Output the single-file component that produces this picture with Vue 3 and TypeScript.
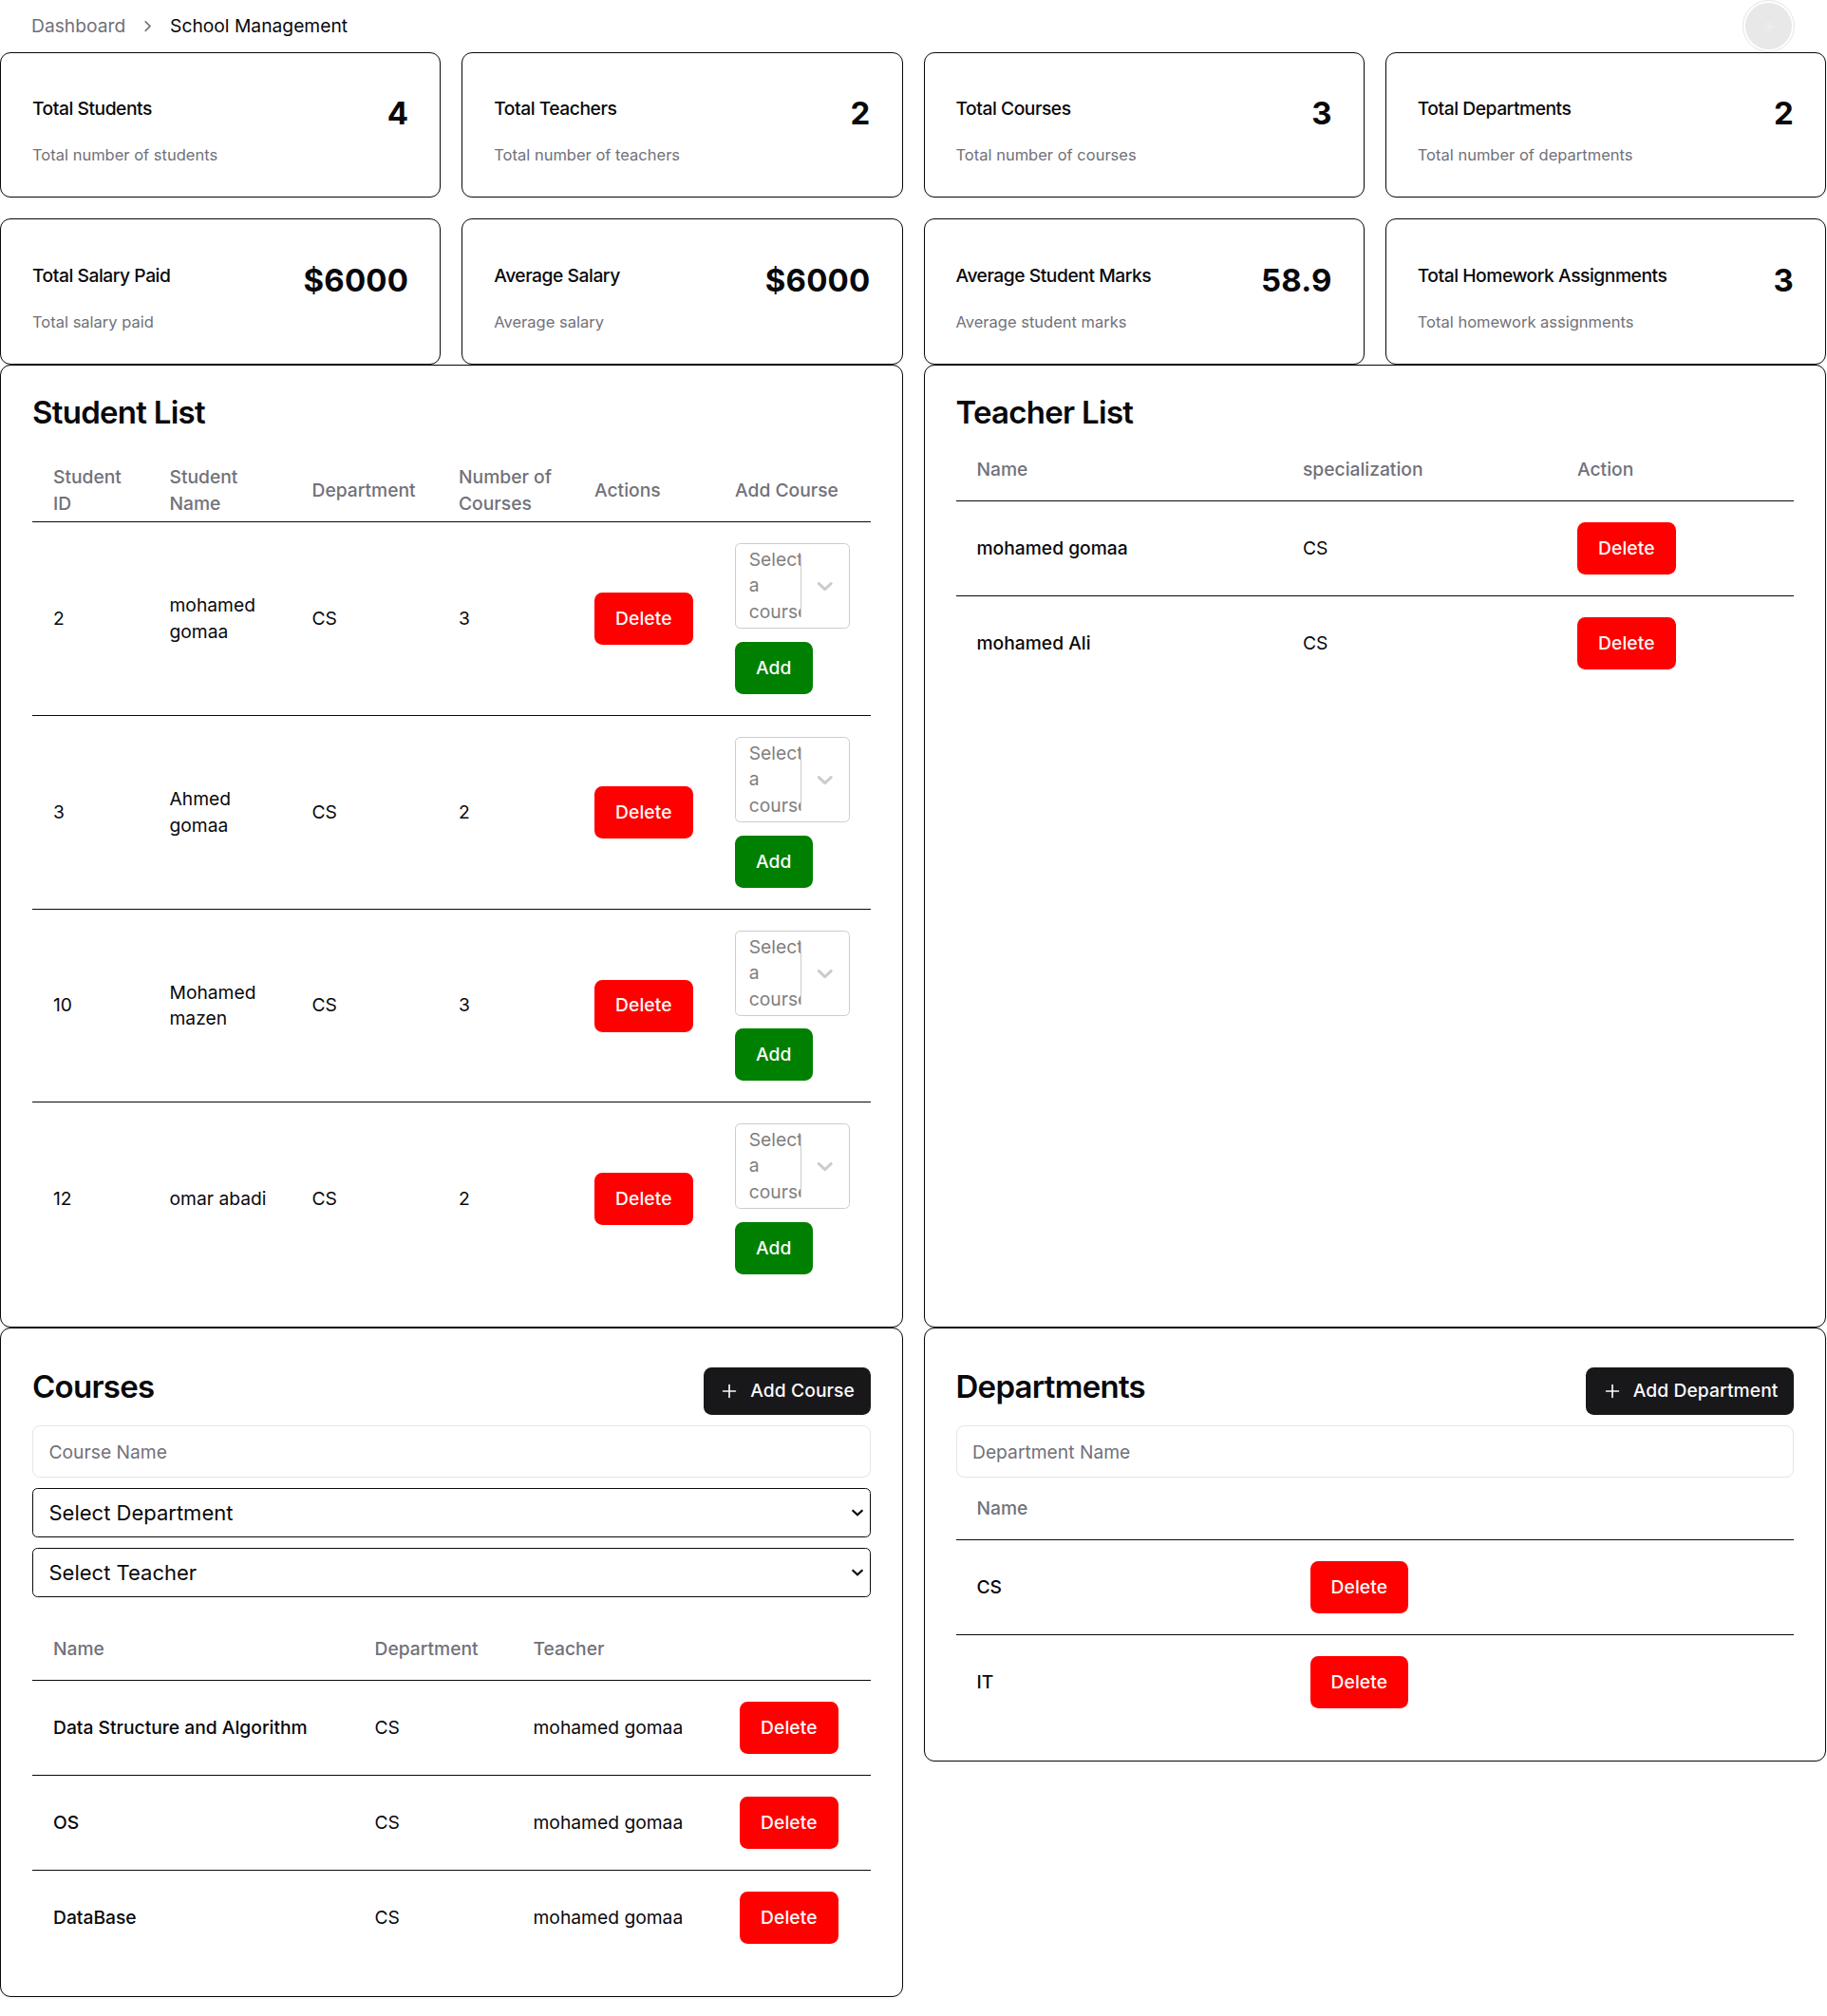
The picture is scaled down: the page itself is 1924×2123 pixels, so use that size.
<script setup lang="ts">
interface Stat {
  title: string
  value: string
  note: string
}

interface Student {
  id: number
  name: string
  department: string
  courses: number
}

interface Teacher {
  name: string
  specialization: string
}

interface Course {
  name: string
  department: string
  teacher: string
}

const stats: Stat[] = [
  { title: 'Total Students', value: '4', note: 'Total number of students' },
  { title: 'Total Teachers', value: '2', note: 'Total number of teachers' },
  { title: 'Total Courses', value: '3', note: 'Total number of courses' },
  { title: 'Total Departments', value: '2', note: 'Total number of departments' },
  { title: 'Total Salary Paid', value: '$6000', note: 'Total salary paid' },
  { title: 'Average Salary', value: '$6000', note: 'Average salary' },
  { title: 'Average Student Marks', value: '58.9', note: 'Average student marks' },
  { title: 'Total Homework Assignments', value: '3', note: 'Total homework assignments' },
]

const students: Student[] = [
  { id: 2, name: 'mohamed gomaa', department: 'CS', courses: 3 },
  { id: 3, name: 'Ahmed gomaa', department: 'CS', courses: 2 },
  { id: 10, name: 'Mohamed mazen', department: 'CS', courses: 3 },
  { id: 12, name: 'omar abadi', department: 'CS', courses: 2 },
]

const teachers: Teacher[] = [
  { name: 'mohamed gomaa', specialization: 'CS' },
  { name: 'mohamed Ali', specialization: 'CS' },
]

const courses: Course[] = [
  { name: 'Data Structure and Algorithm', department: 'CS', teacher: 'mohamed gomaa' },
  { name: 'OS', department: 'CS', teacher: 'mohamed gomaa' },
  { name: 'DataBase', department: 'CS', teacher: 'mohamed gomaa' },
]

const departments: string[] = ['CS', 'IT']
const pickers: string[] = ['Select Department', 'Select Teacher']
</script>

<template>
  <div class="page">
    <header class="topbar">
      <nav class="crumbs">
        <span class="crumb-link">Dashboard</span>
        <svg class="crumb-sep" viewBox="0 0 24 24"><path d="m9 18 6-6-6-6" /></svg>
        <span>School Management</span>
      </nav>
      <div class="avatar">
        <div class="avatar-fill">
          <svg viewBox="0 0 12 12">
            <circle class="ring" cx="6" cy="6" r="4.2" />
            <circle class="core" cx="6" cy="6" r="1.4" />
          </svg>
        </div>
      </div>
    </header>

    <section class="stats">
      <article v-for="s in stats" :key="s.title" class="card stat">
        <div class="stat-head">
          <h3 class="stat-title">{{ s.title }}</h3>
          <div class="stat-value">{{ s.value }}</div>
        </div>
        <p class="stat-note">{{ s.note }}</p>
      </article>
    </section>

    <section class="panels">
      <article class="card panel">
        <h2 class="heading">Student List</h2>
        <table class="table students">
          <colgroup>
            <col class="s1" /><col class="s2" /><col class="s3" /><col class="s4" /><col class="s5" /><col />
          </colgroup>
          <thead>
            <tr>
              <th>Student ID</th>
              <th>Student Name</th>
              <th>Department</th>
              <th>Number of Courses</th>
              <th>Actions</th>
              <th>Add Course</th>
            </tr>
          </thead>
          <tbody>
            <tr v-for="s in students" :key="s.id">
              <td>{{ s.id }}</td>
              <td>{{ s.name }}</td>
              <td>{{ s.department }}</td>
              <td>{{ s.courses }}</td>
              <td><button class="btn danger">Delete</button></td>
              <td>
                <div class="combo">
                  <div class="combo-value"><div class="combo-text">Select a course</div></div>
                  <span class="combo-line"></span>
                  <div class="combo-arrow">
                    <svg viewBox="0 0 20 20">
                      <path d="M4.516 7.548c0.436-0.446 1.043-0.481 1.576 0l3.908 3.747 3.908-3.747c0.533-0.481 1.141-0.446 1.574 0 0.436 0.445 0.408 1.197 0 1.615-0.406 0.418-4.695 4.502-4.695 4.502-0.217 0.223-0.502 0.335-0.787 0.335s-0.57-0.112-0.789-0.335c0 0-4.287-4.084-4.695-4.502s-0.436-1.17 0-1.615z" />
                    </svg>
                  </div>
                </div>
                <button class="btn success">Add</button>
              </td>
            </tr>
          </tbody>
        </table>
      </article>

      <article class="card panel">
        <h2 class="heading">Teacher List</h2>
        <table class="table teachers">
          <colgroup><col class="t1" /><col class="t2" /><col /></colgroup>
          <thead>
            <tr>
              <th>Name</th>
              <th>specialization</th>
              <th>Action</th>
            </tr>
          </thead>
          <tbody>
            <tr v-for="t in teachers" :key="t.name">
              <td class="strong">{{ t.name }}</td>
              <td>{{ t.specialization }}</td>
              <td><button class="btn danger">Delete</button></td>
            </tr>
          </tbody>
        </table>
      </article>

      <article class="card panel">
        <div class="panel-head">
          <h2 class="heading">Courses</h2>
          <button class="btn primary">
            <svg viewBox="0 0 24 24"><path d="M5 12h14" /><path d="M12 5v14" /></svg>
            Add Course
          </button>
        </div>
        <input class="field" type="text" placeholder="Course Name" />
        <div v-for="p in pickers" :key="p" class="picker">
          <span>{{ p }}</span>
          <svg viewBox="0 0 14 8"><path d="M1.6 1.3 7 6.3l5.4-5" /></svg>
        </div>
        <table class="table courses">
          <colgroup><col class="c1" /><col class="c2" /><col class="c3" /><col /></colgroup>
          <thead>
            <tr>
              <th>Name</th>
              <th>Department</th>
              <th>Teacher</th>
              <th></th>
            </tr>
          </thead>
          <tbody>
            <tr v-for="c in courses" :key="c.name">
              <td class="strong">{{ c.name }}</td>
              <td>{{ c.department }}</td>
              <td>{{ c.teacher }}</td>
              <td><button class="btn danger">Delete</button></td>
            </tr>
          </tbody>
        </table>
      </article>

      <article class="card panel short">
        <div class="panel-head">
          <h2 class="heading">Departments</h2>
          <button class="btn primary">
            <svg viewBox="0 0 24 24"><path d="M5 12h14" /><path d="M12 5v14" /></svg>
            Add Department
          </button>
        </div>
        <input class="field" type="text" placeholder="Department Name" />
        <table class="table">
          <colgroup><col class="d1" /><col /></colgroup>
          <thead>
            <tr>
              <th>Name</th>
              <th></th>
            </tr>
          </thead>
          <tbody>
            <tr v-for="d in departments" :key="d">
              <td class="strong">{{ d }}</td>
              <td><button class="btn danger">Delete</button></td>
            </tr>
          </tbody>
        </table>
      </article>
    </section>
  </div>
</template>

<style>
body {
  margin: 0;
  background: #fff;
}
</style>

<style scoped>
.page,
.page * {
  box-sizing: border-box;
}
.page {
  width: 1923px;
  min-height: 2123px;
  font-family: Inter, 'Liberation Sans', sans-serif;
  font-size: 19.25px;
  line-height: 27.5px;
  color: #09090b;
}
h2,
h3,
p {
  margin: 0;
}
.topbar {
  display: flex;
  align-items: center;
  justify-content: space-between;
  height: 55px;
  padding: 0 33px;
}
.crumbs {
  display: flex;
  align-items: center;
  gap: 13.75px;
}
.crumb-link {
  color: #71717a;
}
.crumb-sep {
  width: 19.25px;
  height: 19.25px;
  fill: none;
  stroke: #71717a;
  stroke-width: 2;
  stroke-linecap: round;
  stroke-linejoin: round;
}
.avatar {
  display: flex;
  width: 55px;
  height: 55px;
  padding: 2px;
  border: 1px solid #e4e4e7;
  border-radius: 50%;
}
.avatar-fill {
  display: flex;
  flex: 1;
  align-items: center;
  justify-content: center;
  border-radius: 50%;
  background: #e8e8e8;
}
.avatar-fill svg {
  width: 12px;
  height: 12px;
}
.ring {
  fill: none;
  stroke: #f0f0f0;
  stroke-width: 1.4;
  stroke-dasharray: 1.6 1.1;
}
.core {
  fill: none;
  stroke: #f3f3f3;
  stroke-width: 1;
}
.card {
  border: 1px solid #09090b;
  border-radius: 11px;
  background: #fff;
  box-shadow: 0 1px 3px rgba(0, 0, 0, 0.06);
}
.stats {
  display: grid;
  grid-template-columns: repeat(4, 1fr);
  grid-template-rows: 153px 154px;
  gap: 22px;
}
.stat {
  padding: 41px 33px 0;
}
.stat:nth-child(n + 5) {
  padding-top: 42px;
}
.stat-head {
  display: flex;
  justify-content: space-between;
  height: 55px;
}
.stat-title {
  padding-top: 3.5px;
  font-size: 19.25px;
  font-weight: 500;
  letter-spacing: -0.024em;
}
.stat-value {
  font-size: 33px;
  line-height: 44px;
  font-weight: 700;
  letter-spacing: 0.006em;
}
.stat-note {
  font-size: 16.5px;
  line-height: 22px;
  color: #71717a;
}
.panels {
  display: grid;
  grid-template-columns: repeat(2, 1fr);
  column-gap: 22px;
  align-items: start;
}
.panel {
  padding: 33px;
  align-self: stretch;
}
.short {
  align-self: start;
}
.heading {
  font-size: 33px;
  line-height: 33px;
  font-weight: 600;
  letter-spacing: -0.022em;
}
.panel-head {
  display: flex;
  align-items: flex-start;
  justify-content: space-between;
  padding-top: 8px;
  margin-bottom: 11px;
}
.panel-head .heading {
  padding-top: 4px;
}
.table {
  width: 100%;
  table-layout: fixed;
  border-collapse: separate;
  border-spacing: 0;
}
.students {
  margin-top: 33px;
}
.teachers {
  margin-top: 11px;
}
.courses {
  margin-top: 22px;
}
.s1 { width: 122.5px; }
.s2 { width: 150px; }
.s3 { width: 154.5px; }
.s4 { width: 143px; }
.s5 { width: 148px; }
.t1 { width: 343.5px; }
.t2 { width: 289px; }
.c1 { width: 338.5px; }
.c2 { width: 167px; }
.c3 { width: 217.5px; }
.d1 { width: 351px; }
th {
  height: 66px;
  padding: 0 22px;
  text-align: left;
  vertical-align: middle;
  font-weight: 500;
  color: #71717a;
  border-bottom: 1px solid #09090b;
}
td {
  padding: 22px;
  vertical-align: middle;
  border-bottom: 1px solid #09090b;
}
tbody tr:last-child td {
  border-bottom: 0;
}
.strong {
  font-weight: 500;
}
.btn {
  display: flex;
  align-items: center;
  height: 55px;
  padding: 0 22px;
  border: 0;
  border-radius: 8.25px;
  font: 500 19.25px/27.5px Inter, 'Liberation Sans', sans-serif;
  letter-spacing: 0.005em;
  color: #fafafa;
  white-space: nowrap;
}
.danger {
  background: #ff0000;
}
.success {
  background: #008000;
}
.primary {
  gap: 11px;
  height: 50px;
  padding: 0 16.5px;
  background: #18181b;
}
.primary svg {
  width: 22px;
  height: 22px;
  fill: none;
  stroke: currentColor;
  stroke-width: 1.8;
  stroke-linecap: round;
}
.combo {
  display: flex;
  align-items: center;
  height: 90px;
  margin-bottom: 14px;
  border: 1px solid #ccc;
  border-radius: 5.5px;
}
tr:nth-child(3) .combo {
  margin-bottom: 13px;
}
.combo-value {
  flex: 1;
  min-width: 0;
  padding: 2.75px 0 2.75px 11px;
  overflow: hidden;
}
.combo-text {
  width: 30px;
  margin-left: 2.75px;
  color: #808080;
}
.combo-line {
  align-self: stretch;
  width: 1px;
  margin: 11px 0;
  background: #ccc;
}
.combo-arrow {
  display: flex;
  padding: 11px;
}
.combo-arrow svg {
  width: 27.5px;
  height: 27.5px;
  fill: #ccc;
}
.field {
  display: block;
  width: 100%;
  height: 55px;
  padding: 0 16.5px;
  border: 1px solid #e4e4e7;
  border-radius: 8.25px;
  font: 400 19.25px/27.5px Inter, 'Liberation Sans', sans-serif;
}
.field::placeholder {
  color: #71717a;
  opacity: 1;
}
.picker {
  display: flex;
  align-items: center;
  justify-content: space-between;
  height: 52px;
  margin-top: 11px;
  padding: 0 6px 0 16.5px;
  border: 1px solid #09090b;
  border-radius: 5.5px;
  font-size: 22px;
  line-height: 33px;
}
.picker svg {
  width: 14px;
  height: 8px;
  fill: none;
  stroke: #09090b;
  stroke-width: 2.2;
}
</style>
